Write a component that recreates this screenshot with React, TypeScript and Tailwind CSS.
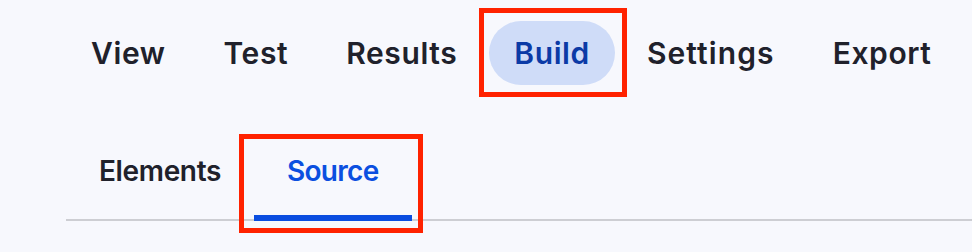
import React from "react";

const topItems = ["View", "Test", "Results", "Build", "Settings", "Export"];

export default function App() {
  return (
    <div
      className="relative w-[972px] h-[252px] overflow-hidden bg-[#f7f8fd]"
      style={{ fontFamily: "Inter, 'Noto Sans', sans-serif" }}
    >
      <div className="pt-[21px] pl-[65px] flex gap-[6px]">
        {topItems.map((t) => (
          <div
            key={t}
            className={
              t === "Build"
                ? "h-[64px] px-[25px] flex items-center rounded-full bg-[#cfdcf8] text-[#0b3aa6] text-[30px] font-[580] tracking-[0.6px]"
                : t === "Settings"
                ? "h-[64px] px-[26px] flex items-center rounded-full text-[#20212b] text-[30px] font-[580] tracking-[1.1px]"
                : "h-[64px] px-[26px] flex items-center rounded-full text-[#20212b] text-[30px] font-[580] tracking-[0.6px]"
            }
          >
            {t}
          </div>
        ))}
      </div>

      <div className="mt-[41px] ml-[66px] flex border-b-2 border-[#cdced3]">
        <div className="h-[95px] -mb-[2px] px-[33px] flex items-center border-b-[6px] border-transparent text-[#20212b] text-[28px] font-[580] tracking-[-0.35px]">
          Elements
        </div>
        <div className="h-[95px] -mb-[2px] px-[33px] flex items-center border-b-[6px] border-[#0a4de0] text-[#0b4fe0] text-[28px] font-[580] tracking-[-0.7px]">
          Source
        </div>
      </div>

      <div className="absolute left-[479px] top-[8px] w-[148px] h-[89px] border-[5px] border-[#ff2200]" />
      <div className="absolute left-[239px] top-[134px] w-[184px] h-[99px] border-[5px] border-[#ff2200]" />
    </div>
  );
}
